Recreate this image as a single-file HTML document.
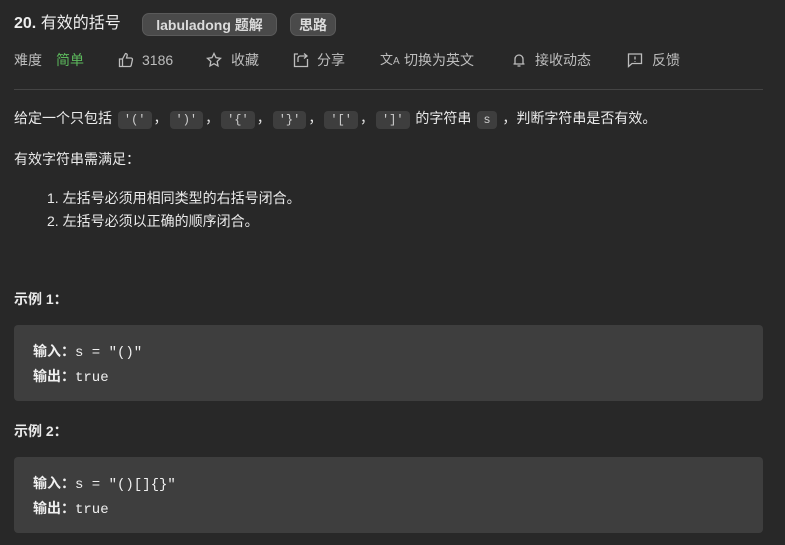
<!DOCTYPE html>
<html><head><meta charset="utf-8"><style>
body{margin:0;width:785px;height:545px;background:#282828;color:#e8e8e8;font-family:"Liberation Sans","Noto Sans CJK SC",sans-serif;position:relative;overflow:hidden}
.a{position:absolute;white-space:nowrap}
.tag{position:absolute;top:13px;height:23px;line-height:23px;background:#4a4a4a;border:1px solid #5a5a5a;border-radius:7px;font-size:14px;font-weight:bold;color:#dcdcdc;text-align:center;box-sizing:border-box}
.meta{top:50px;font-size:14px;color:#bdbdbd;line-height:20px}
.ic{position:absolute;top:52px}
code{font-family:"Liberation Mono",monospace;background:#3e3e3e;border-radius:4px;padding:2px 6px;font-size:12px;color:#cfcfcf;margin:0 2px}
.p{font-size:14px;line-height:20px;color:#eaeaea}
.blk{position:absolute;left:14px;width:749px;height:76px;background:#3e3e3e;border-radius:4px}
.ln{position:absolute;left:19px;font-size:14px;font-family:"Liberation Mono","Noto Sans CJK SC",monospace;color:#f0f0f0}
.ln b{font-family:"Liberation Sans","Noto Sans CJK SC",sans-serif}
</style></head><body>
<div class="a" style="left:14px;top:13px;font-size:16px;line-height:22px;color:#eee"><b>20.</b> 有效的括号</div>
<div class="tag" style="left:142px;width:135px">labuladong 题解</div>
<div class="tag" style="left:290px;width:46px">思路</div>

<div class="a meta" style="left:14px">难度</div>
<div class="a meta" style="left:56px;color:#5cb85c">简单</div>
<svg class="ic" style="left:118px" width="16" height="16" viewBox="0 0 16 16" fill="none" stroke="#bdbdbd" stroke-width="1.3"><path d="M1.5 7h3v7.5h-3zM4.5 7l3-5.5c1.3 0 2 1 1.6 2.3L8.5 6h4.5c1 0 1.6.8 1.4 1.8l-1.2 5.5c-.2.8-.8 1.2-1.6 1.2H4.5"/></svg>
<div class="a meta" style="left:142px">3186</div>
<svg class="ic" style="left:206px" width="16" height="16" viewBox="0 0 16 16" fill="none" stroke="#bdbdbd" stroke-width="1.3"><path d="M8 1.5l2 4.2 4.5.6-3.3 3.1.8 4.5L8 11.7l-4 2.2.8-4.5L1.5 6.3l4.5-.6z"/></svg>
<div class="a meta" style="left:231px">收藏</div>
<svg class="ic" style="left:293px" width="16" height="16" viewBox="0 0 16 16" fill="none" stroke="#bdbdbd" stroke-width="1.3"><path d="M5 2H1.5v12.5h13V7M5 10V6c0-1 1-2 2-2h7M11 1.5L14 4 11 6.5"/></svg>
<div class="a meta" style="left:317px">分享</div>
<div class="a meta" style="left:380px;font-size:13px;color:#bdbdbd">文<span style="font-size:10px">A</span></div>
<div class="a meta" style="left:404px">切换为英文</div>
<svg class="ic" style="left:512px" width="14" height="16" viewBox="0 0 14 16" fill="none" stroke="#bdbdbd" stroke-width="1.3"><path d="M3 12V7a4 4 0 018 0v5M1.5 12h11M5.5 14h3"/></svg>
<div class="a meta" style="left:535px">接收动态</div>
<svg class="ic" style="left:627px" width="16" height="16" viewBox="0 0 16 16" fill="none" stroke="#bdbdbd" stroke-width="1.3"><path d="M1.5 2h13v9.5H5L1.5 14.5z"/><path d="M8 4.5v3M8 9v.8"/></svg>
<div class="a meta" style="left:652px">反馈</div>

<div class="a" style="left:14px;top:89px;width:749px;height:1px;background:#444"></div>

<div class="a p" style="left:14px;top:108px">给定一个只包括 <code>'('</code>，<code>')'</code>，<code>'{'</code>，<code>'}'</code>，<code>'['</code>，<code>']'</code> 的字符串 <code>s</code> ，判断字符串是否有效。</div>
<div class="a p" style="left:14px;top:149px">有效字符串需满足：</div>
<div class="a p" style="left:47px;top:188px">1. 左括号必须用相同类型的右括号闭合。</div>
<div class="a p" style="left:47px;top:211px">2. 左括号必须以正确的顺序闭合。</div>

<div class="a p" style="left:14px;top:289px;font-weight:bold">示例 1：</div>
<div class="blk" style="top:325px">
<div class="ln" style="top:16px"><b>输入：</b>s = "()"</div>
<div class="ln" style="top:41px"><b>输出：</b>true</div>
</div>
<div class="a p" style="left:14px;top:421px;font-weight:bold">示例 2：</div>
<div class="blk" style="top:457px">
<div class="ln" style="top:16px"><b>输入：</b>s = "()[]{}"</div>
<div class="ln" style="top:41px"><b>输出：</b>true</div>
</div>
</body></html>
